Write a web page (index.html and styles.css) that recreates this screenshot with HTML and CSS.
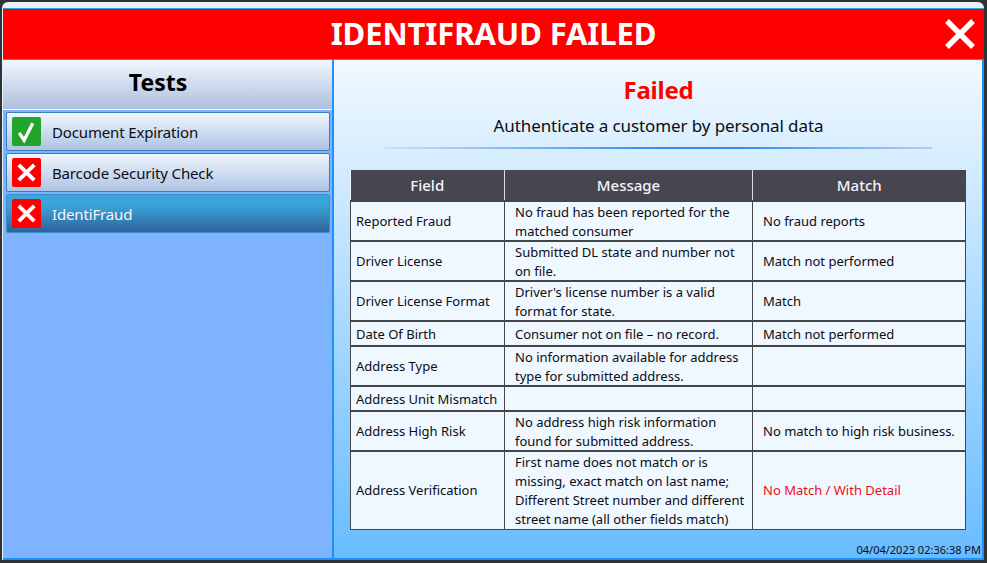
FILE: index.html
```html
<!DOCTYPE html>
<html lang="en">
<head>
    <meta charset="UTF-8">
    <title>IdentiFraud Failed</title>
    <link rel="stylesheet" href="styles.css">
</head>
<body>
    <div class="window">
        <div class="titlebar">
            <span class="title">IDENTIFRAUD FAILED</span>
            <svg class="close" viewBox="0 0 32 32"><path d="M3 3 L29 29 M29 3 L3 29" stroke="#fff" stroke-width="5.4" fill="none"/></svg>
        </div>
        <div class="main">
            <div class="sidebar">
                <div class="sidebar-head">Tests</div>
                <div class="test-list">
                    <div class="test">
                        <span class="badge pass"><svg viewBox="0 0 30 30"><path d="M7.5 16.5 L12.5 24 L21.5 6.5" stroke="#fff" stroke-width="3.4" fill="none"/></svg></span>
                        Document Expiration
                    </div>
                    <div class="test">
                        <span class="badge fail"><svg viewBox="0 0 30 30"><path d="M7 7 L23 23 M23 7 L7 23" stroke="#fff" stroke-width="4" fill="none"/></svg></span>
                        Barcode Security Check
                    </div>
                    <div class="test active">
                        <span class="badge fail"><svg viewBox="0 0 30 30"><path d="M7 7 L23 23 M23 7 L7 23" stroke="#fff" stroke-width="4" fill="none"/></svg></span>
                        IdentiFraud
                    </div>
                </div>
            </div>
            <div class="content">
                <div class="status">Failed</div>
                <div class="subtitle">Authenticate a customer by personal data</div>
                <div class="rule"></div>
                <table class="results">
                    <colgroup>
                        <col class="col-field">
                        <col class="col-message">
                        <col class="col-match">
                    </colgroup>
                    <thead>
                        <tr><th>Field</th><th>Message</th><th>Match</th></tr>
                    </thead>
                    <tbody>
                        <tr class="h40"><td>Reported Fraud</td><td>No fraud has been reported for the matched consumer</td><td>No fraud reports</td></tr>
                        <tr class="h40"><td>Driver License</td><td>Submitted DL state and number not on file.</td><td>Match not performed</td></tr>
                        <tr class="h40"><td>Driver License Format</td><td>Driver's license number is a valid format for state.</td><td>Match</td></tr>
                        <tr class="h25"><td>Date Of Birth</td><td>Consumer not on file – no record.</td><td>Match not performed</td></tr>
                        <tr class="h40"><td>Address Type</td><td>No information available for address type for submitted address.</td><td></td></tr>
                        <tr class="h25"><td>Address Unit Mismatch</td><td></td><td></td></tr>
                        <tr class="h40"><td>Address High Risk</td><td>No address high risk information found for submitted address.</td><td>No match to high risk business.</td></tr>
                        <tr class="h78"><td>Address Verification</td><td>First name does not match or is missing, exact match on last name; Different Street number and different street name (all other fields match)</td><td class="nomatch">No Match / With Detail</td></tr>
                    </tbody>
                </table>
                <div class="timestamp">04/04/2023 02:36:38 PM</div>
            </div>
        </div>
    </div>
</body>
</html>
```

FILE: styles.css
```css
html, body {
    margin: 0;
    padding: 0;
    height: 100%;
    overflow: hidden;
}
body {
    background-color: #2e3338;
    font-family: "Noto Sans", "Open Sans", sans-serif;
    color: #0c0c14;
}
.window {
    box-sizing: border-box;
    width: 982px;
    height: 558px;
    margin: 2px 0 0 2px;
    padding-top: 6px;
    border-radius: 6px 6px 0 0;
    background-color: #e6f3fb;
    display: flex;
    flex-direction: column;
}
.titlebar {
    box-sizing: border-box;
    height: 52px;
    margin-left: 1px;
    padding-bottom: 3px;
    background-color: #f00;
    border-top: 1px solid #29a0e0;
    border-bottom: 1px solid #1e90ff;
    display: flex;
    align-items: center;
    justify-content: center;
    position: relative;
}
.title {
    color: #fff;
    font-size: 31px;
    font-weight: 700;
    letter-spacing: -0.1px;
}
.close {
    position: absolute;
    right: 8px;
    top: 9px;
    width: 32px;
    height: 32px;
}
.main {
    flex: 1;
    min-height: 0;
    display: flex;
    margin-left: 1px;
    border-bottom: 2px solid #1e90ff;
    border-right: 2px solid #1e90ff;
}
.sidebar {
    box-sizing: border-box;
    width: 331px;
    background-color: #7db3ff;
    border-right: 2px solid #1e90ff;
}
.sidebar-head {
    box-sizing: border-box;
    height: 50px;
    display: flex;
    align-items: center;
    justify-content: center;
    padding: 0 19px 5px 0;
    font-size: 23px;
    font-weight: 700;
    color: #000;
    background: linear-gradient(#f0f7ff, #aec0dc);
    border-bottom: 1px solid #f4f9ff;
}
.test-list {
    padding: 2px 2px 0 3px;
    display: flex;
    flex-direction: column;
    gap: 2px;
}
.test {
    box-sizing: border-box;
    height: 39px;
    display: flex;
    align-items: center;
    gap: 11px;
    padding-left: 5px;
    font-size: 15px;
    letter-spacing: -0.15px;
    border: 1px solid #3a7cc0;
    border-radius: 2px;
    background: linear-gradient(#eff7ff, #aec3e2);
}
.test.active {
    color: #f2f6fb;
    border-color: #3a8cc4;
    background: linear-gradient(#3aa6dc, #39a4d8 30%, #30629a);
}
.badge {
    width: 29px;
    height: 29px;
    border-radius: 2px;
    flex-shrink: 0;
}
.badge svg {
    display: block;
    width: 29px;
    height: 29px;
}
.pass {
    background-color: #22a52a;
}
.fail {
    background-color: #f00;
}
.content {
    flex: 1;
    min-width: 0;
    position: relative;
    box-sizing: border-box;
    padding: 13px 17px 0 16px;
    background: linear-gradient(#f2f9ff, #68bcff);
    text-align: center;
}
.status {
    color: #f00;
    font-size: 24px;
    font-weight: 700;
    letter-spacing: -0.2px;
    line-height: 34px;
    padding-left: 2px;
}
.subtitle {
    font-size: 17px;
    line-height: 24px;
    margin-top: 7px;
    padding-left: 2px;
    letter-spacing: -0.1px;
}
.rule {
    height: 2px;
    margin: 9px 33px 21px 34px;
    background: linear-gradient(to right, #cfe0f4, #2f8ff0 50%, #2f8ff0 65%, #b5cff0);
}
.results {
    width: 616px;
    table-layout: fixed;
    border-collapse: collapse;
    background-color: #eff7ff;
    text-align: left;
    font-size: 13px;
    line-height: 18.5px;
}
.col-field {
    width: 154px;
}
.col-message {
    width: 248px;
}
.results th {
    height: 30px;
    padding: 0;
    background-color: #47454f;
    color: #f4f4f8;
    font-size: 15px;
    font-weight: 500;
    text-align: center;
    border-left: 1px solid #d8dde4;
}
.results th:first-child {
    border-left: none;
}
.results td {
    padding: 1px 5px 0;
    border: 1px solid #45464c;
    border-width: 2px 1px 1px;
    overflow: hidden;
}
.results td:nth-child(n+2) {
    padding: 1px 5px 0 10px;
}
.h40 {
    height: 40px;
}
.h25 {
    height: 25px;
}
.h78 {
    height: 78px;
    line-height: 18.75px;
}
.results .nomatch {
    color: #f01010;
}
.timestamp {
    position: absolute;
    right: 1px;
    bottom: 1px;
    font-size: 11px;
    line-height: 15px;
}
```
